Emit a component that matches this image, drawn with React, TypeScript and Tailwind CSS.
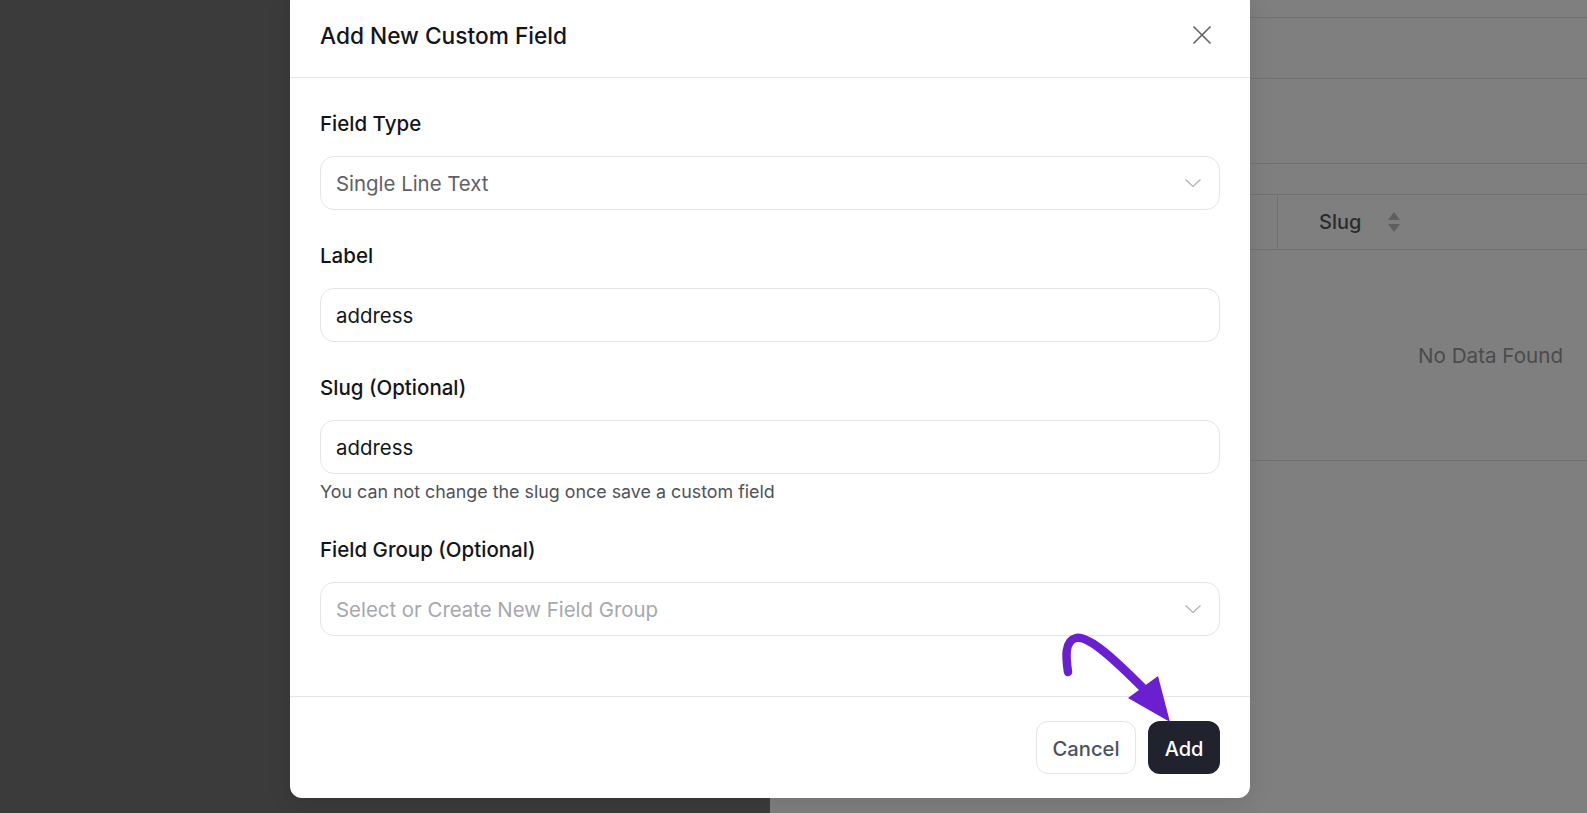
import type { ReactNode } from 'react';

const inter = { fontFamily: 'Inter, "Liberation Sans", sans-serif' };

function ChevronDown() {
  return (
    <svg width="18" height="10" viewBox="0 0 18 10" fill="none" className="shrink-0">
      <path d="M1.5 1.5L9 8.5L16.5 1.5" stroke="#b0b0b5" strokeWidth="1.2" />
    </svg>
  );
}

function Field({ label, className, children }: { label: string; className?: string; children: ReactNode }) {
  return (
    <div className={className}>
      <div className="text-[20.5px] leading-6 font-medium text-[#14151a] mb-[20px]">{label}</div>
      {children}
    </div>
  );
}

function Box({ text, tone, chevron }: { text: string; tone: string; chevron?: boolean }) {
  return (
    <div className="h-[54px] border border-[#e3e5e8] rounded-[14px] pl-[15px] pr-[17px] flex items-center justify-between bg-white">
      <span className={`text-[20.4px] pt-[2px] ${tone}`}>{text}</span>
      {chevron && <ChevronDown />}
    </div>
  );
}

function BackgroundTable() {
  return (
    <div className="flex-1 bg-[#7f7f7f] flex flex-col">
      <div className="h-[18px] border-b border-[#717171]" />
      <div className="h-[61px] border-b border-[#717171]" />
      <div className="h-[85px] border-b border-[#717171]" />
      <div className="h-[31px] border-b border-[#717171]" />
      <div className="h-[55px] border-b border-[#717171] flex pl-[507px]">
        <div className="border-l border-[#717171] pl-[41px] flex items-center gap-[26px]">
          <span className="text-[20px] font-medium text-[#2b2b2e]">Slug</span>
          <svg width="14" height="20" viewBox="0 0 14 20" fill="#5f5f5f">
            <path d="M7 0L13 8H1Z" />
            <path d="M1 12H13L7 20Z" />
          </svg>
        </div>
      </div>
      <div className="h-[211px] border-b border-[#717171] flex items-center justify-end pr-[24px]">
        <span className="text-[20.6px] pt-[2px] text-[#4b4b4b]">No Data Found</span>
      </div>
    </div>
  );
}

function Arrow() {
  return (
    <svg width="130" height="100" viewBox="0 0 130 100" className="absolute left-[1055px] top-[630px]" fill="none">
      <path
        d="M13 42C11 28 9 11 21 8C34 5 62 32 90 60"
        stroke="#6a1fd1"
        strokeWidth="8.5"
        strokeLinecap="round"
      />
      <path d="M103 46L73 68L115 92Z" fill="#6a1fd1" />
    </svg>
  );
}

export default function App() {
  return (
    <div className="relative h-[813px] w-full flex overflow-hidden" style={inter}>
      <div className="w-[770px] bg-[#3b3b3b]" />
      <BackgroundTable />

      <div className="absolute left-[290px] top-[-10px] w-[960px] h-[808px] bg-white rounded-[12px] flex flex-col shadow-[0_6px_24px_rgba(0,0,0,0.1)]">
        <div className="h-[88px] pt-[6px] pl-[30px] pr-[38px] border-b border-[#e3e5e8] flex items-center justify-between shrink-0">
          <h2 className="text-[22.7px] font-medium text-[#14151a]">Add New Custom Field</h2>
          <svg width="20" height="20" viewBox="0 0 20 20" fill="none" className="mb-[3px]">
            <path d="M1.5 1.5L18.5 18.5M18.5 1.5L1.5 18.5" stroke="#5f6068" strokeWidth="1.6" />
          </svg>
        </div>

        <div className="flex-1 px-[30px] pt-[34px]">
          <Field label="Field Type">
            <Box text="Single Line Text" tone="text-[#5f6068]" chevron />
          </Field>
          <Field label="Label" className="mt-[34px]">
            <Box text="address" tone="text-[#14151a]" />
          </Field>
          <Field label="Slug (Optional)" className="mt-[34px]">
            <Box text="address" tone="text-[#14151a]" />
          </Field>
          <p className="text-[17.85px] leading-5 text-[#50525a] mt-[8px]">You can not change the slug once save a custom field</p>
          <Field label="Field Group (Optional)" className="mt-[36px]">
            <Box text="Select or Create New Field Group" tone="text-[#a7a8ad]" chevron />
          </Field>
        </div>

        <div className="h-[102px] border-t border-[#e3e5e8] pr-[30px] pt-[24px] flex justify-end gap-3 shrink-0">
          <button className="w-[100px] h-[53px] rounded-[12px] border border-[#e3e5e8] bg-white text-[20.2px] pt-[3px] font-medium text-[#50525a]">Cancel</button>
          <button className="w-[72px] h-[53px] rounded-[12px] bg-[#20222e] text-[20px] pt-[2px] font-medium text-white">Add</button>
        </div>
      </div>

      <Arrow />
    </div>
  );
}
